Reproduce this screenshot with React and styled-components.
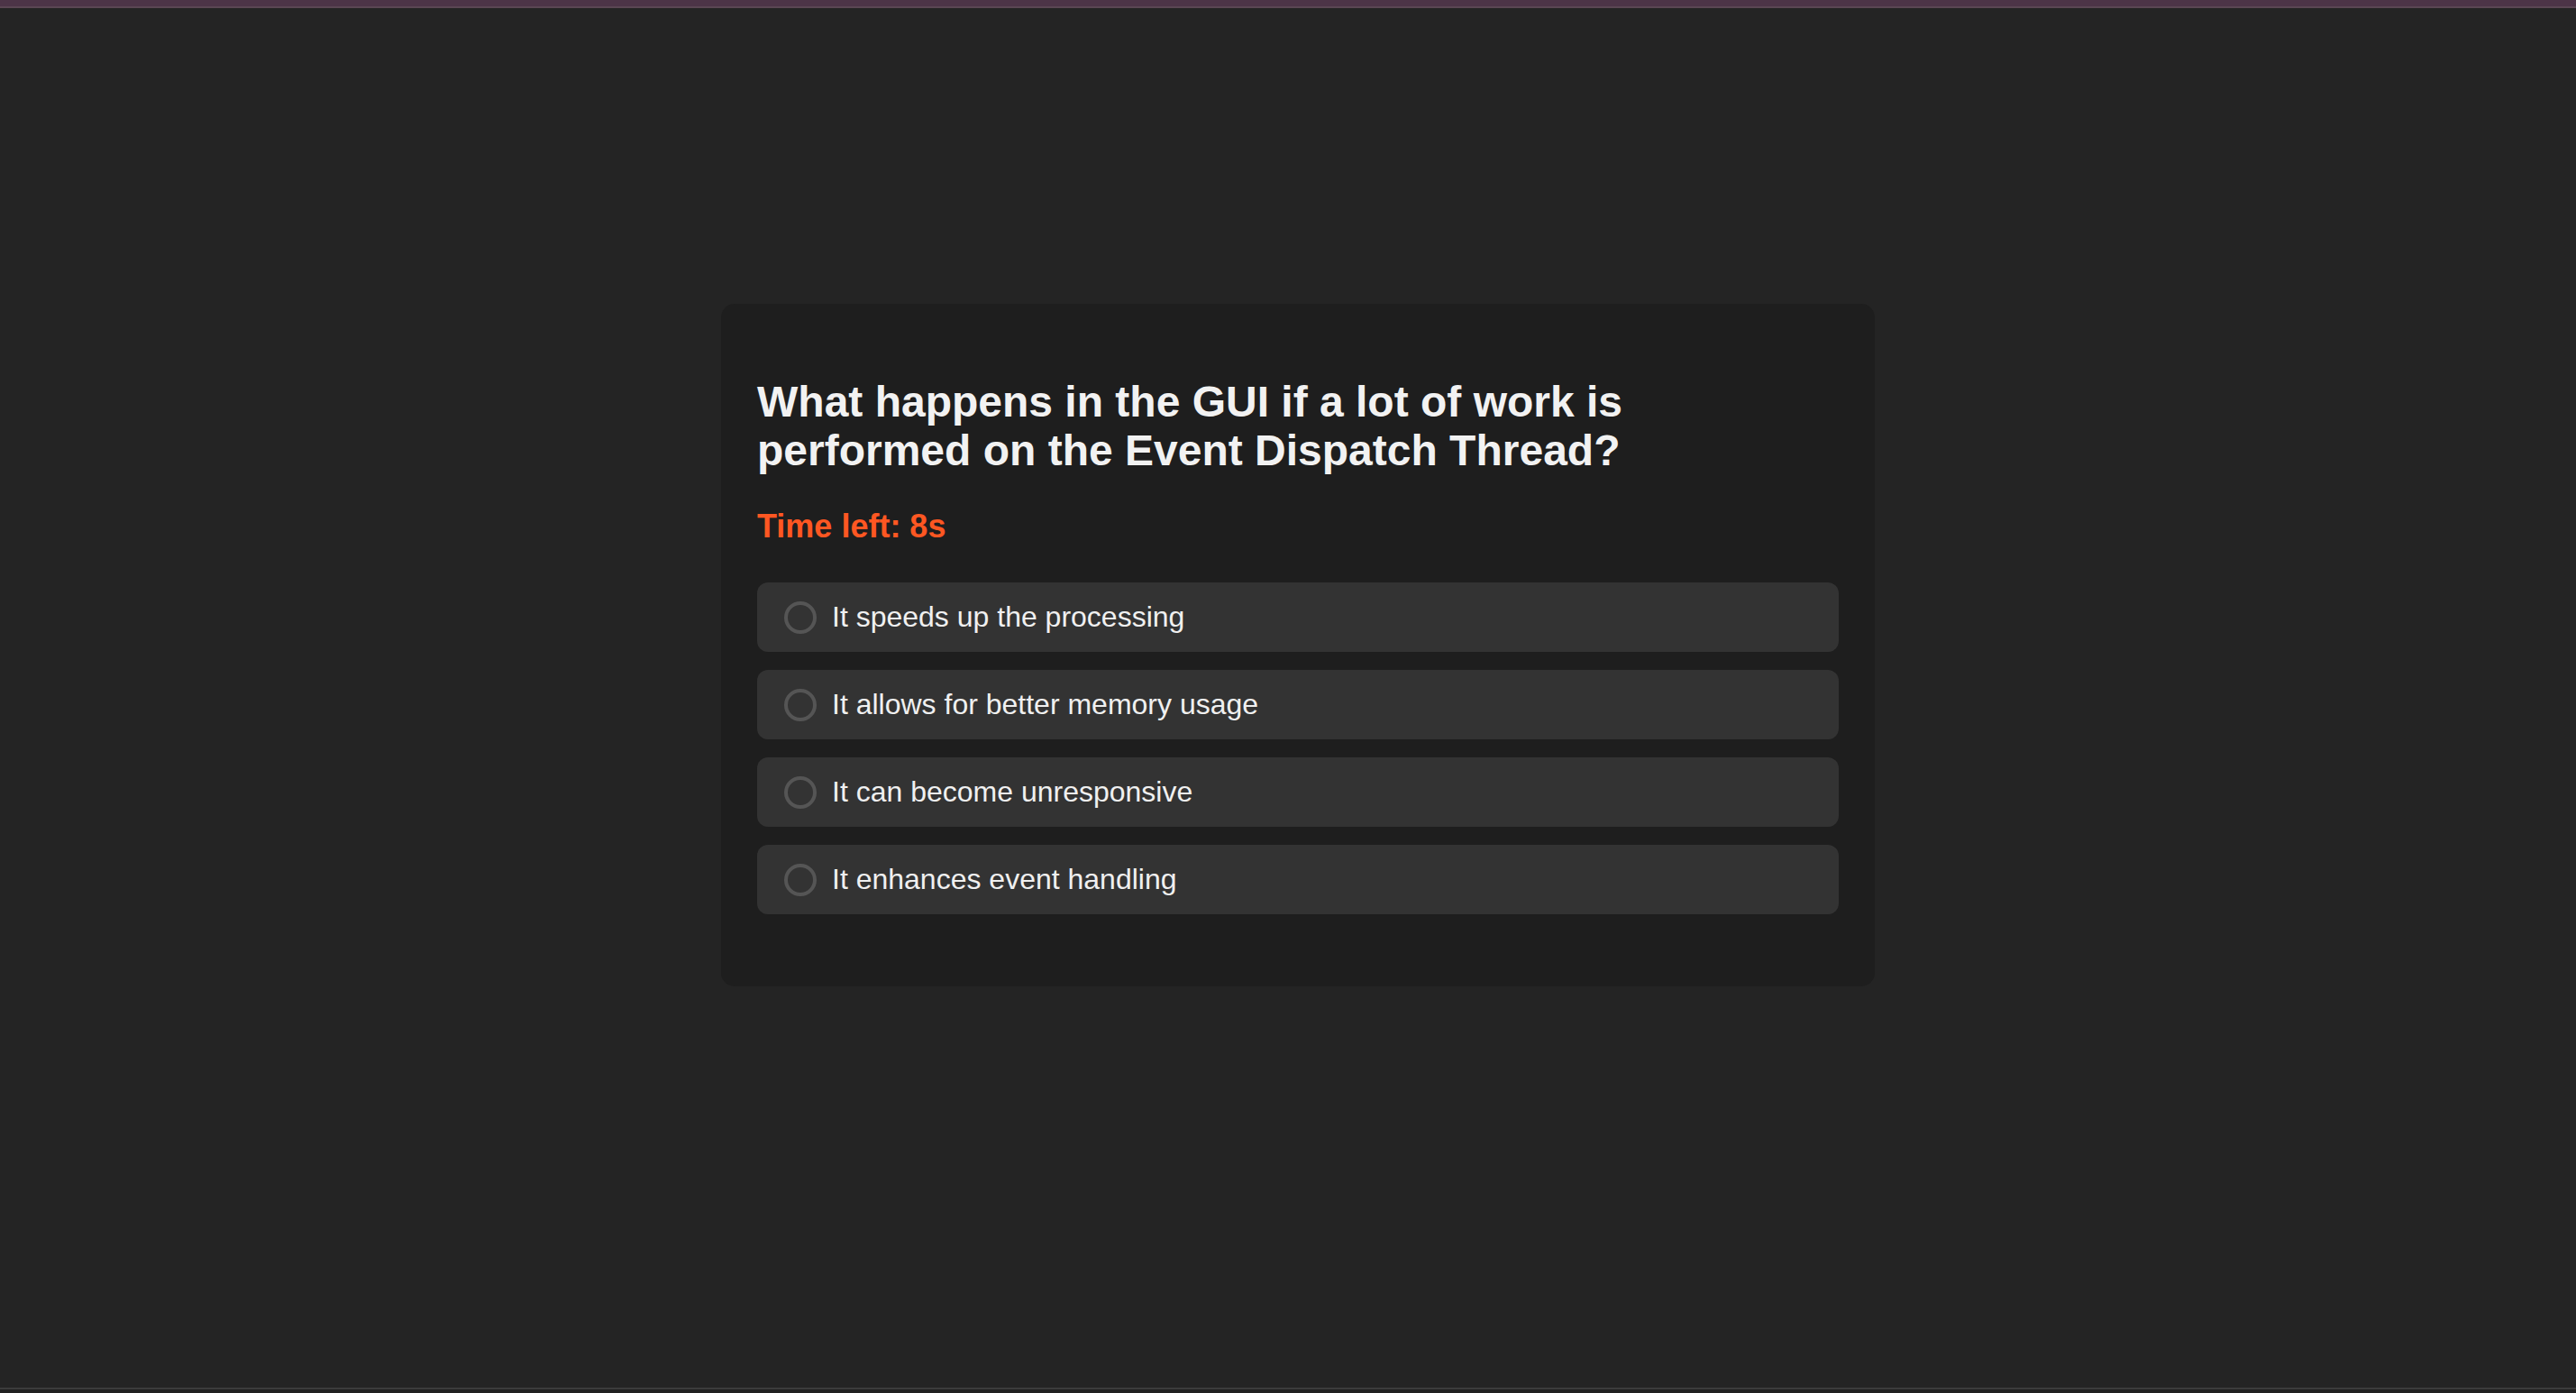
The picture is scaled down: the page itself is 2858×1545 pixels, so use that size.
import React from 'react';
import styled, { createGlobalStyle } from 'styled-components';

const GlobalStyle = createGlobalStyle`
  html, body {
    margin: 0;
    padding: 0;
    background: #242424;
  }
  body {
    font-family: "Liberation Sans", Arial, sans-serif;
  }
`;

const question = 'What happens in the GUI if a lot of work is performed on the Event Dispatch Thread?';
const options = [
  'It speeds up the processing',
  'It allows for better memory usage',
  'It can become unresponsive',
  'It enhances event handling',
];

const Page = styled.div`
  height: 1545px;
  display: flex;
  flex-direction: column;
  background: #242424;
`;

const TopBar = styled.div`
  height: 7px;
  background: #4c3447;
  border-bottom: 2px solid #5a4653;
  flex-shrink: 0;
`;

const Stage = styled.main`
  flex: 1;
  display: flex;
  justify-content: center;
  align-items: flex-start;
  padding: 328px 0 0 22px;
`;

const BottomEdge = styled.div`
  height: 4px;
  background: #202020;
  border-top: 2px solid #3c3c3c;
  flex-shrink: 0;
`;

const Card = styled.section`
  width: 1280px;
  box-sizing: border-box;
  padding: 40px 40px 80px;
  background: #1e1e1e;
  border-radius: 15px;
`;

const Question = styled.h2`
  margin: 42px 0 0;
  max-width: 1040px;
  font-size: 48px;
  line-height: 54px;
  font-weight: 700;
  color: #f2f2f2;
`;

const Timer = styled.p`
  margin: 36px 0 0;
  font-size: 36px;
  line-height: 41px;
  font-weight: 700;
  color: #ff5722;
`;

const OptionList = styled.div`
  margin-top: 42px;
  display: flex;
  flex-direction: column;
  gap: 20px;
`;

const Option = styled.label`
  display: flex;
  align-items: center;
  gap: 17px;
  height: 77px;
  box-sizing: border-box;
  padding: 0 30px;
  background: #333333;
  border-radius: 12px;
  font-size: 32px;
  color: #f0f0f0;
  cursor: pointer;
`;

const Radio = styled.span`
  width: 36px;
  height: 36px;
  box-sizing: border-box;
  border: 4px solid #555555;
  border-radius: 50%;
  flex-shrink: 0;
`;

export default function App() {
  return (
    <>
      <GlobalStyle />
      <Page>
        <TopBar />
        <Stage>
          <Card>
            <Question>{question}</Question>
            <Timer>Time left: 8s</Timer>
            <OptionList>
              {options.map((text) => (
                <Option key={text}>
                  <Radio />
                  {text}
                </Option>
              ))}
            </OptionList>
          </Card>
        </Stage>
        <BottomEdge />
      </Page>
    </>
  );
}
